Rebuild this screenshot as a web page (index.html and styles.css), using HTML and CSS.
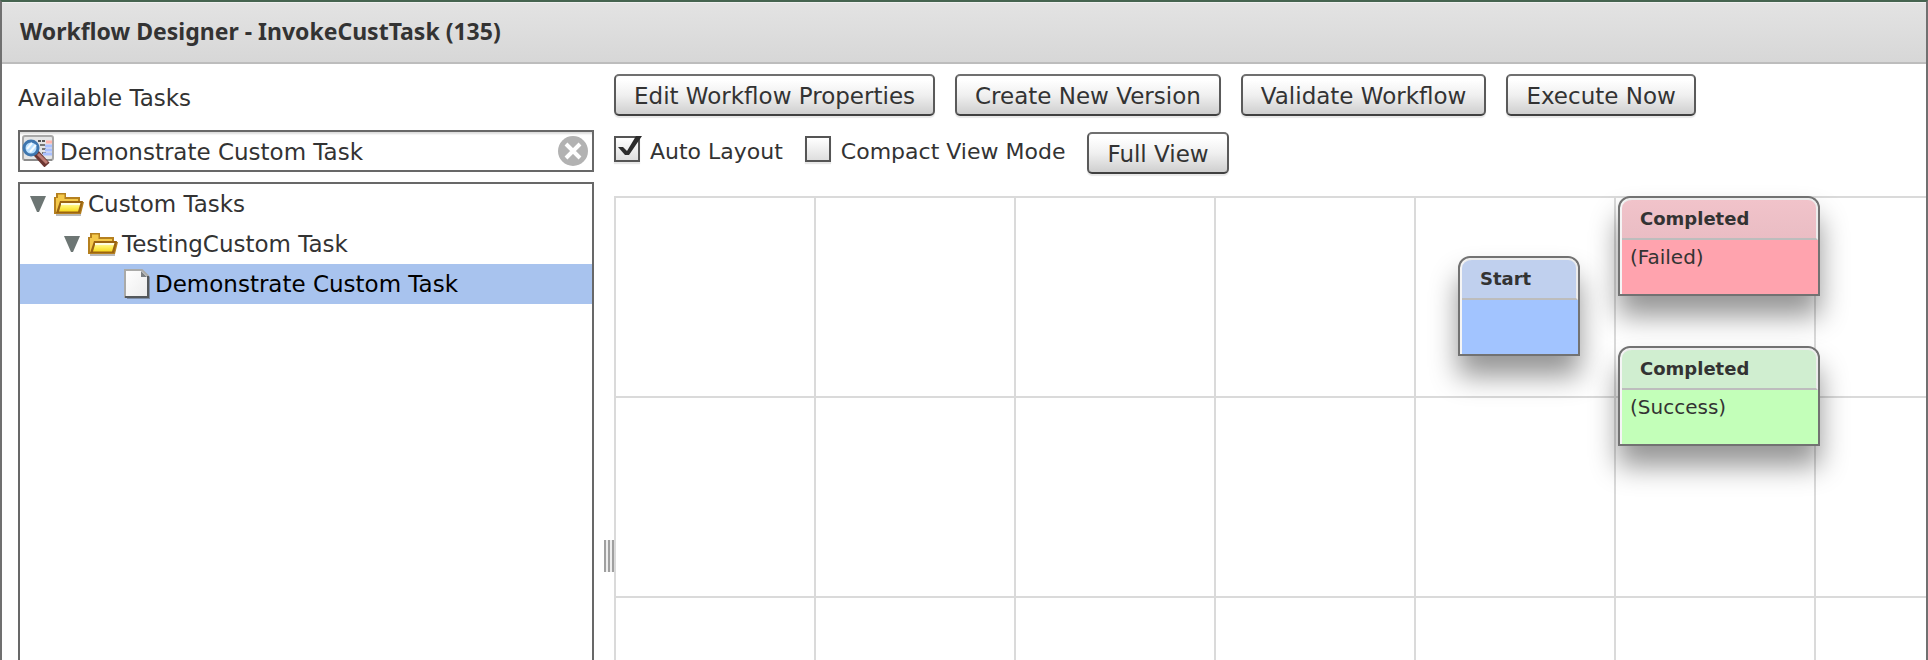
FILE: index.html
```html
<!DOCTYPE html>
<html lang="en">
<head>
<meta charset="utf-8">
<title>Workflow Designer</title>
<link rel="stylesheet" href="styles.css">
</head>
<body>
<svg class="sprite" aria-hidden="true">
  <defs>
    <linearGradient id="folderFront" x1="0" y1="0" x2="0" y2="1">
      <stop offset="0" stop-color="#fffab0"/><stop offset="0.5" stop-color="#ffef5a"/><stop offset="1" stop-color="#f8d820"/>
    </linearGradient>
    <linearGradient id="pageFill" x1="0" y1="0" x2="1" y2="1">
      <stop offset="0" stop-color="#ffffff"/><stop offset="1" stop-color="#ececec"/>
    </linearGradient>
    <symbol id="folder" viewBox="0 0 30 24">
      <path d="M2 22h25v2H2z" fill="#b9b9b9"/>
      <path d="M0 22V5h2V1h10v4h14v5h4l-3 12z" fill="#b5801f"/>
      <path d="M2 20V6h2V2.500h6.500V7H24v3H7L3 20z" fill="#f4c84a"/>
      <path d="M6 9h23l-3 12H2z" fill="#9b6412"/>
      <path d="M7.500 11h19l-2.500 8.500H5z" fill="url(#folderFront)"/>
      <path d="M7 12h19" stroke="#fffde0" stroke-width="2" fill="none"/>
    </symbol>
    <symbol id="page" viewBox="0 0 26 30">
      <path d="M3 28h22V7l1 1v22H3z" fill="#7d8ea8"/>
      <path d="M1 1h17l6 6v21H1z" fill="url(#pageFill)" stroke="#aaaaa8" stroke-width="2"/>
      <path d="M24 7v21H1" fill="none" stroke="#55595c" stroke-width="2"/>
      <path d="M17 2v6h6z" fill="#7c8083"/>
    </symbol>
  </defs>
</svg>
<div class="window">
  <header class="titlebar"><h1 class="title">Workflow Designer - InvokeCustTask (135)</h1></header>
  <div class="workspace">
    <aside class="sidebar">
      <label class="sidebar-label" for="task-search">Available Tasks</label>
      <div class="search">
        <svg class="search-icon" viewBox="0 0 32 32" aria-hidden="true">
          <rect x="1" y="1" width="30" height="24" rx="2" fill="#e4e5e6" stroke="#a8a8a8" stroke-width="2"/>
          <path d="M2 25h28" stroke="#8c8c8c" stroke-width="2"/>
          <path d="M16 6h8" stroke="#555" stroke-width="2" stroke-dasharray="3 1"/>
          <path d="M24 7h6" stroke="#ffb3ad" stroke-width="3"/>
          <path d="M18 10h5M20 14h4M20 18h4" stroke="#777" stroke-width="2"/>
          <path d="M23 11h7M23 15h7M21 19h9" stroke="#a9c0ff" stroke-width="3"/>
          <path d="M14 18l11 12" stroke="#6b3531" stroke-width="7"/>
          <path d="M16 19l9 9" stroke="#bd7b73" stroke-width="3"/>
          <circle cx="9" cy="13" r="7" fill="#b9e0ff" stroke="#3e76ae" stroke-width="3"/>
          <path d="M5 14l5-6M8 17l6-7" stroke="#f3fbff" stroke-width="2"/>
        </svg>
        <input class="search-input" id="task-search" type="text" value="Demonstrate Custom Task">
        <button class="clear" type="button" aria-label="Clear search">
          <svg viewBox="0 0 30 30" aria-hidden="true"><circle cx="15" cy="15" r="15" fill="#b2b2b2"/><path d="M8 8l14 14M22 8L8 22" stroke="#fff" stroke-width="4"/></svg>
        </button>
      </div>
      <ul class="tree">
        <li>
          <div class="row level-1"><svg class="arrow" viewBox="0 0 16 16" aria-hidden="true"><path d="M0 0h16L9 16H7z" fill="#6d7674"/></svg><svg class="folder" aria-hidden="true"><use href="#folder"/></svg><span>Custom Tasks</span></div>
          <ul class="branch">
            <li>
              <div class="row level-2"><svg class="arrow" viewBox="0 0 16 16" aria-hidden="true"><path d="M0 0h16L9 16H7z" fill="#6d7674"/></svg><svg class="folder" aria-hidden="true"><use href="#folder"/></svg><span>TestingCustom Task</span></div>
              <ul class="branch">
                <li><div class="row level-3 selected"><svg class="page" aria-hidden="true"><use href="#page"/></svg><span>Demonstrate Custom Task</span></div></li>
              </ul>
            </li>
          </ul>
        </li>
      </ul>
    </aside>
    <div class="splitter"><div class="grip"></div></div>
    <main class="designer">
      <div class="toolbar">
        <button class="button" type="button">Edit Workflow Properties</button>
        <button class="button" type="button">Create New Version</button>
        <button class="button" type="button">Validate Workflow</button>
        <button class="button" type="button">Execute Now</button>
      </div>
      <div class="options">
        <label class="option" for="auto-layout"><span class="box"><input class="check" id="auto-layout" type="checkbox" checked><svg class="tick" viewBox="0 0 28 26" aria-hidden="true"><path d="M4 11h5l4 4L22 0h6L15 19h-4z" fill="#2c2c2c"/></svg></span>Auto Layout</label>
        <label class="option" for="compact"><span class="box"><input class="check" id="compact" type="checkbox"><svg class="tick" viewBox="0 0 28 26" aria-hidden="true"><path d="M4 11h5l4 4L22 0h6L15 19h-4z" fill="#2c2c2c"/></svg></span>Compact View Mode</label>
        <button class="button" type="button">Full View</button>
      </div>
      <div class="canvas">
        <article class="node start"><h2 class="node-title">Start</h2><p class="node-body"></p></article>
        <article class="node failed"><h2 class="node-title">Completed</h2><p class="node-body">(Failed)</p></article>
        <article class="node success"><h2 class="node-title">Completed</h2><p class="node-body">(Success)</p></article>
      </div>
    </main>
  </div>
</div>
</body>
</html>
```
FILE: styles.css
```css
* { box-sizing: border-box; }

body {
  margin: 0;
  background: #fff;
  color: #333;
  font: 23px/40px "DejaVu Sans", Verdana, sans-serif;
}

h1, h2, p, ul { margin: 0; padding: 0; }
ul { list-style: none; }
svg { display: block; flex: none; }
.sprite { position: absolute; width: 0; height: 0; }

.window {
  display: flex;
  flex-direction: column;
  height: 100vh;
  overflow: hidden;
  border: 2px solid #707070;
  border-top-color: #466450;
  border-bottom: 0;
}

.titlebar {
  padding: 9px 18px 11px;
  background: linear-gradient(#e3e3e3, #d7d7d7);
  border-top: 1px solid #f0f0f0;
  border-bottom: 2px solid #bdbdbd;
}

.title {
  font: bold 23px/39px "Noto Sans", Tahoma, sans-serif;
}

.workspace { display: flex; flex: 1; min-height: 0; }

.sidebar {
  display: flex;
  flex-direction: column;
  flex: none;
  width: 592px;
  padding: 14px 0 0 16px;
}

.sidebar-label { margin-bottom: 12px; }

.search {
  display: flex;
  align-items: center;
  gap: 6px;
  height: 42px;
  margin-bottom: 10px;
  padding: 0 4px 0 2px;
  border: 2px solid #686868;
  box-shadow: inset 0 3px 2px -1px #ddd;
}

.search-icon { width: 32px; height: 32px; }

.search-input {
  flex: 1;
  min-width: 0;
  padding: 2px 0 0;
  border: 0;
  outline: 0;
  background: none;
  color: inherit;
  font: inherit;
  line-height: 36px;
}

.clear {
  width: 30px;
  height: 30px;
  padding: 0;
  border: 0;
  background: none;
}

.tree {
  flex: 1;
  border: 2px solid #686868;
  border-bottom: 0;
}

.row { display: flex; align-items: center; height: 40px; }
.level-1 { padding-left: 10px; }
.level-2 { padding-left: 44px; }
.level-3 { padding-left: 104px; }
.selected { background: #a8c3ee; color: #000; }
.arrow { width: 16px; height: 16px; margin-right: 8px; }
.folder { width: 30px; height: 24px; margin-right: 4px; }
.page { width: 26px; height: 30px; margin-right: 5px; }

.splitter {
  display: flex;
  width: 20px;
  flex: none;
  flex-direction: column;
  align-items: flex-end;
  padding-top: 476px;
}

.grip {
  width: 10px;
  height: 32px;
  background: repeating-linear-gradient(90deg, #a0a0a0 0 2px, #eee 2px 4px);
}

.designer {
  display: flex;
  flex: 1;
  flex-direction: column;
  min-width: 0;
  padding-top: 10px;
}

.toolbar { display: flex; gap: 20px; margin-bottom: 16px; }

.button {
  height: 42px;
  padding: 2px 18px 0;
  border: 2px solid #555;
  border-color: #707070 #5a5a5a #404040;
  border-radius: 5px;
  background: linear-gradient(#fff 10%, #f0f0f0 50%, #cfcfcf);
  box-shadow: 0 2px 1px #e8e8e8;
  color: inherit;
  font: inherit;
  line-height: 36px;
  white-space: nowrap;
}

.options {
  display: flex;
  align-items: flex-start;
  gap: 22px;
  margin-bottom: 22px;
}

.option { display: flex; gap: 10px; font-size: 22px; white-space: nowrap; }

.box { position: relative; width: 26px; height: 26px; margin-top: 4px; }

.check {
  display: block;
  appearance: none;
  width: 26px;
  height: 26px;
  margin: 0;
  border: 2px solid #555;
  background: linear-gradient(#fff, #dedede);
  box-shadow: 0 2px 1px #e8e8e8;
}

.tick {
  display: none;
  position: absolute;
  top: 0;
  left: 0;
  width: 28px;
  height: 26px;
}

.check:checked + .tick { display: block; }

.canvas {
  position: relative;
  flex: 1;
  background:
    repeating-linear-gradient(90deg, #dadada 0 2px, transparent 2px 200px),
    repeating-linear-gradient(#dadada 0 2px, transparent 2px 200px);
}

.node {
  position: absolute;
  width: 202px;
  height: 100px;
  padding-left: 2px;
  border: 2px solid #727272;
  border-radius: 12px 12px 0 0;
  background: #f5f5f5;
  box-shadow: 0 20px 28px rgba(0, 0, 0, 0.42);
  overflow: hidden;
}

.node-title {
  height: 42px;
  padding-left: 18px;
  border: 2px solid #ececec;
  border-left: 0;
  border-bottom-color: #bdbdbd;
  border-radius: 10px 10px 0 0;
  font-size: 18px;
  line-height: 38px;
}

.node-body {
  height: 54px;
  padding-left: 8px;
  font-size: 20px;
  line-height: 34px;
}

.start { top: 60px; left: 844px; width: 122px; }
.failed { top: 0; left: 1004px; }
.success { top: 150px; left: 1004px; }

.start .node-title { background: #c0d0ee; }
.start .node-body { background: #a2c4ff; }
.failed .node-title { background: linear-gradient(#f1c3ca, #eabdc4); }
.failed .node-body { background: #ffa3ae; }
.success .node-title { background: #d0eed0; }
.success .node-body { background: #c3ffb9; }
```
